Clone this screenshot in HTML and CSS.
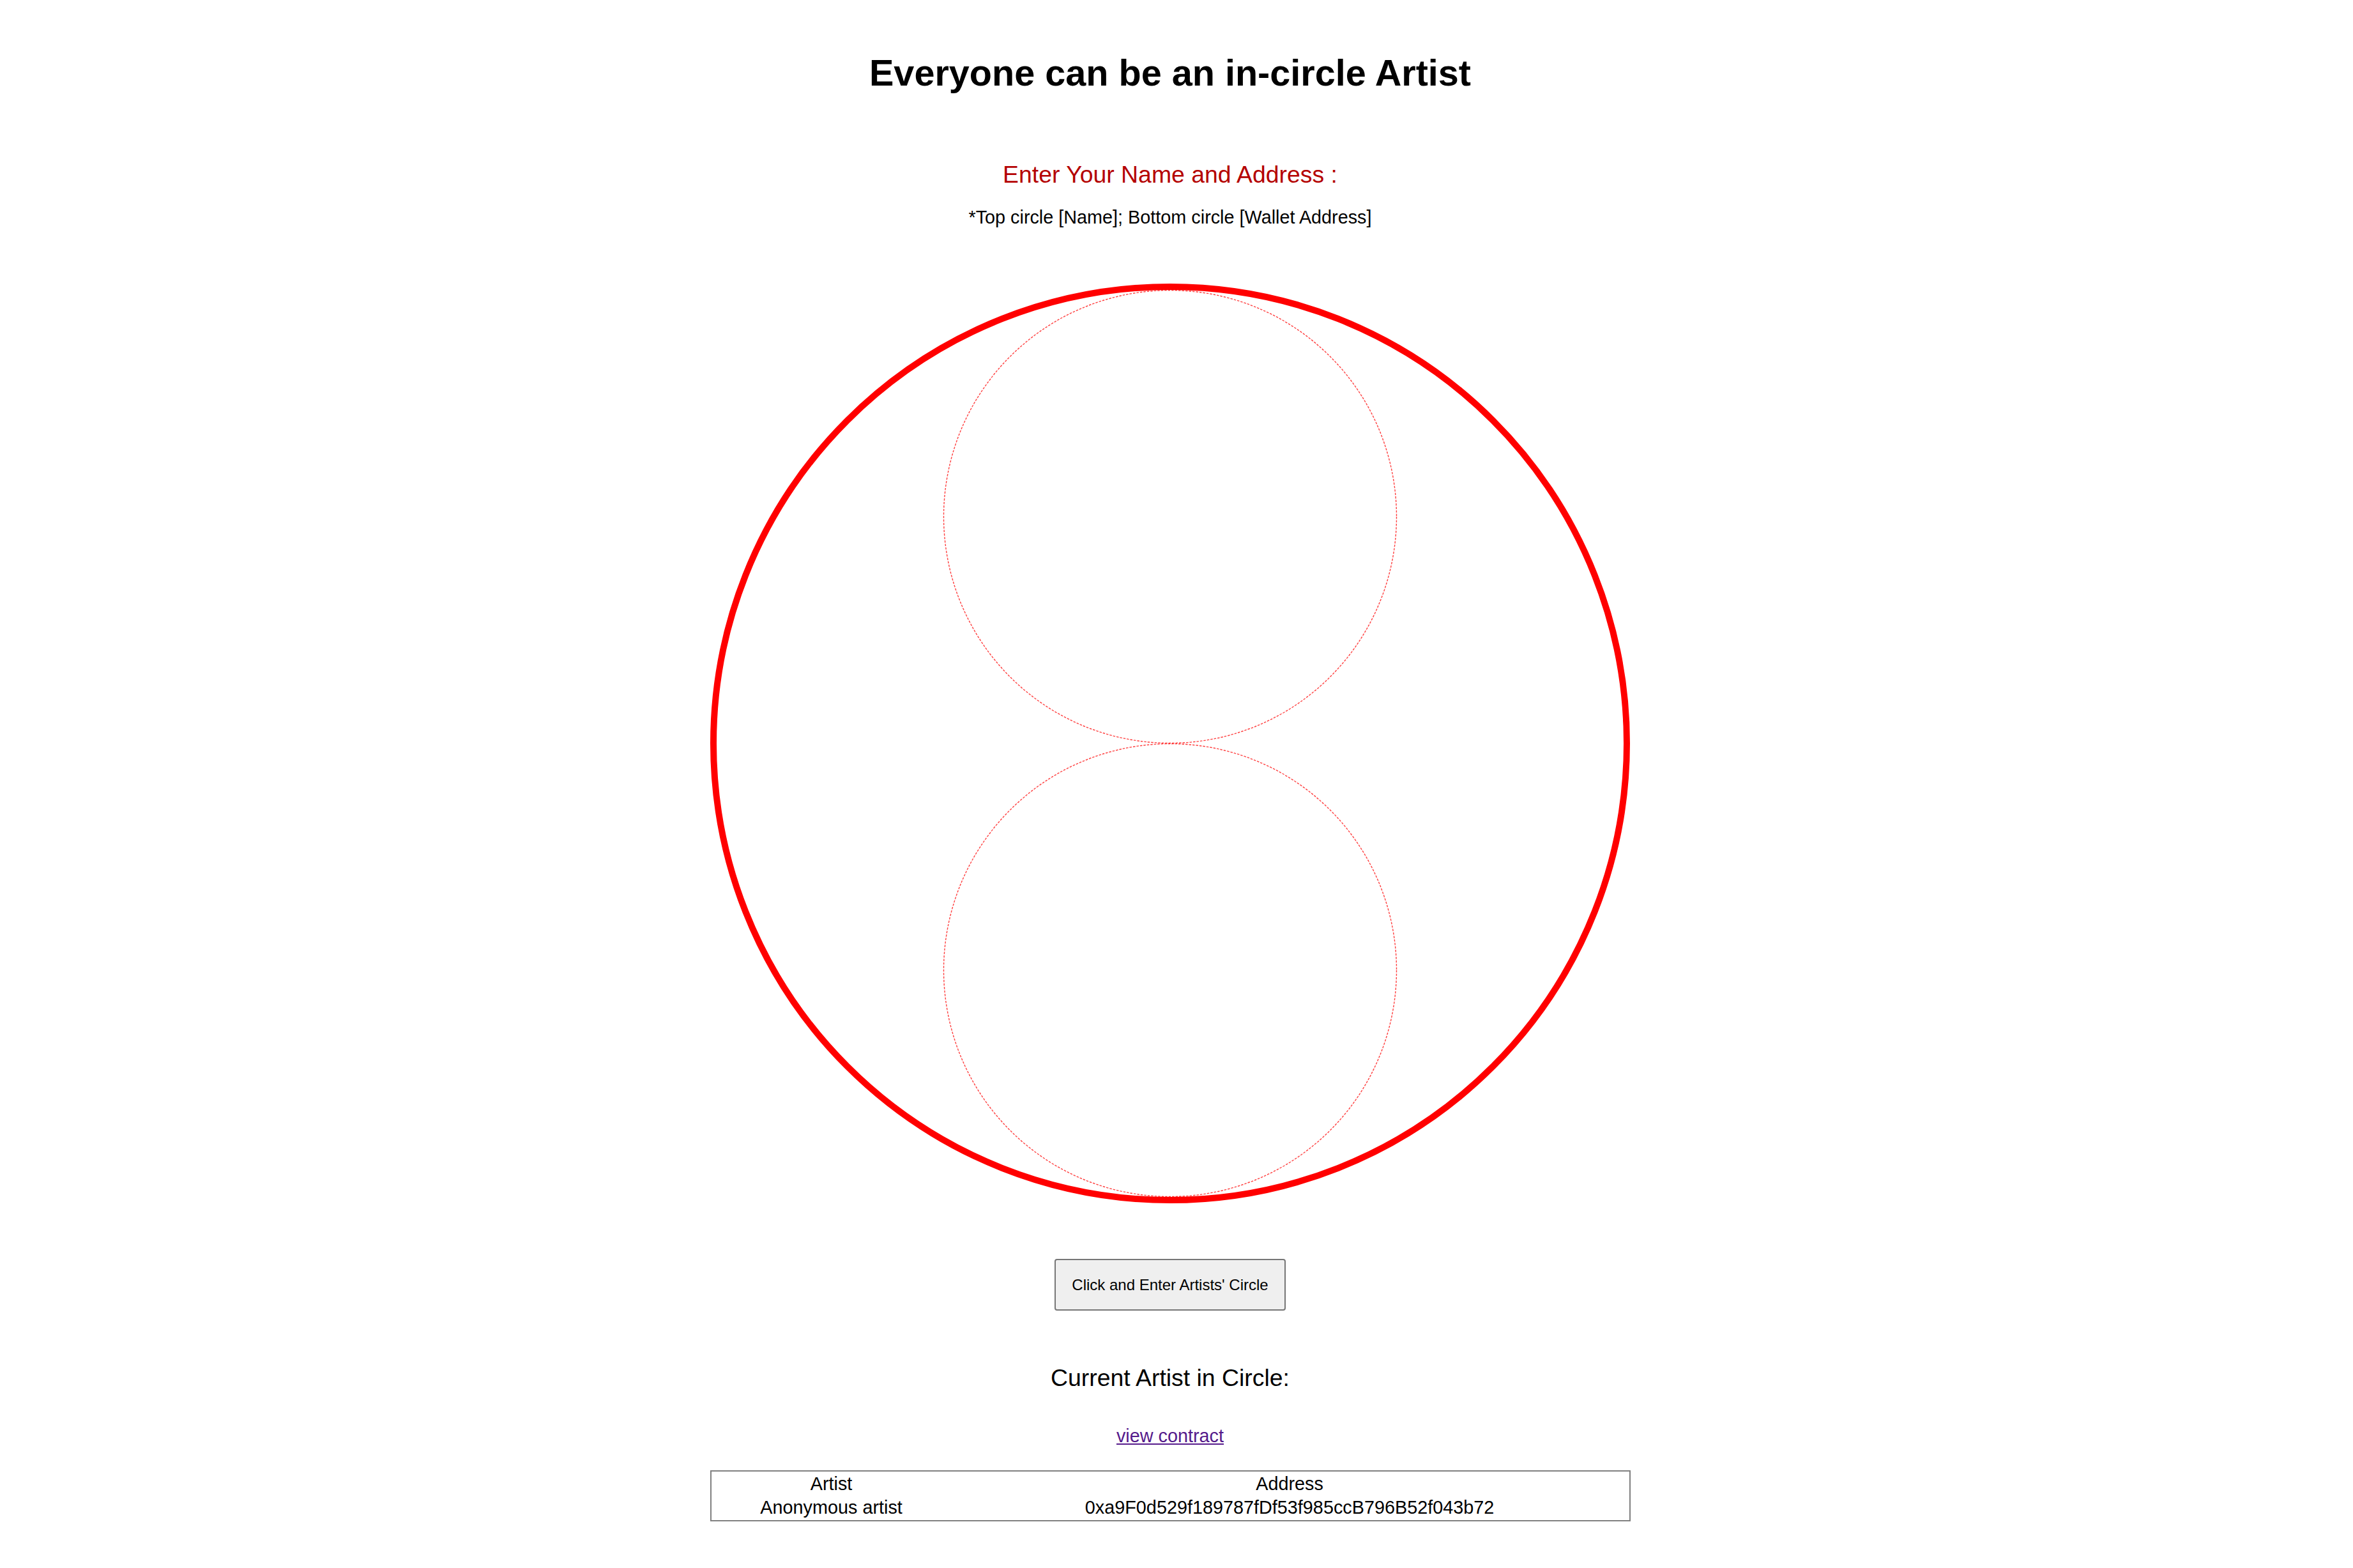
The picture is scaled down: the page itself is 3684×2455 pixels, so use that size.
FILE: index.html
```html
<!DOCTYPE html>
<html lang="en">
<head>
<meta charset="utf-8">
<title>Everyone can be an in-circle Artist</title>
<link rel="stylesheet" href="styles.css">
</head>
<body>
<main class="page">
  <h1 class="title">Everyone can be an in-circle Artist</h1>
  <h2 class="prompt">Enter Your Name and Address :</h2>
  <p class="note">*Top circle [Name]; Bottom circle [Wallet Address]</p>
  <div class="canvas">
    <svg class="drawing" width="1440" height="1440" viewBox="0 0 1440 1440">
      <circle cx="720" cy="720" r="715" fill="none" stroke="#ff0000" stroke-width="10"/>
      <circle cx="720" cy="365" r="354.5" fill="none" stroke="#ff0000" stroke-opacity="0.75" stroke-width="1.4" stroke-dasharray="3.5 2"/>
      <circle cx="720" cy="1075" r="354.5" fill="none" stroke="#ff0000" stroke-opacity="0.75" stroke-width="1.4" stroke-dasharray="3.5 2"/>
    </svg>
    <input class="circle-input top" type="text" aria-label="Name">
    <input class="circle-input bottom" type="text" aria-label="Wallet Address">
  </div>
  <button class="enter-btn" type="button">Click and Enter Artists' Circle</button>
  <h3 class="current">Current Artist in Circle:</h3>
  <a class="contract-link" href="#contract">view contract</a>
  <table class="artists">
    <tr><td>Artist</td><td>Address</td></tr>
    <tr><td>Anonymous artist</td><td>0xa9F0d529f189787fDf53f985ccB796B52f043b72</td></tr>
  </table>
</main>
</body>
</html>
```
FILE: styles.css
```css
html, body {
  margin: 0;
  padding: 0;
  background: #ffffff;
}

body {
  font-family: "Liberation Sans", Arial, sans-serif;
  font-size: 28.8px;
  color: #000000;
}

.page {
  display: flex;
  flex-direction: column;
  align-items: center;
  padding-top: 81px;
  padding-right: 20px;
  padding-bottom: 60px;
}

.title {
  margin: 0;
  font-size: 57.6px;
  font-weight: bold;
  line-height: 66px;
}

.prompt {
  margin: 105px 0 0;
  font-size: 37.4px;
  font-weight: normal;
  line-height: 43px;
  color: #b40000;
}

.note {
  margin: 29px 0 0;
  line-height: 33px;
}

.canvas {
  position: relative;
  width: 1440px;
  height: 1440px;
  margin-top: 87px;
}

.drawing {
  display: block;
}

.circle-input {
  position: absolute;
  left: 366px;
  width: 708px;
  height: 708px;
  border: none;
  border-radius: 50%;
  background: transparent;
  text-align: center;
  font-family: inherit;
  font-size: 28.8px;
  outline: none;
}

.circle-input.top {
  top: 11px;
}

.circle-input.bottom {
  top: 721px;
}

.enter-btn {
  margin-top: 87px;
  padding: 24px 25px;
  font-family: "Liberation Sans", Arial, sans-serif;
  font-size: 24px;
  line-height: 29px;
  color: #000000;
  background: #efefef;
  border: 2px solid #767676;
  border-radius: 4px;
}

.current {
  margin: 84px 0 0;
  font-size: 37.4px;
  font-weight: normal;
  line-height: 43px;
}

.contract-link {
  margin-top: 53px;
  line-height: 33px;
  color: #551a8b;
  text-decoration: underline;
}

.artists {
  margin-top: 37px;
  width: 1441px;
  border: 2px solid #808080;
  border-spacing: 2px;
  font-size: 28.8px;
}

.artists td {
  padding: 1px 2px;
  line-height: 33px;
  text-align: center;
}
```
